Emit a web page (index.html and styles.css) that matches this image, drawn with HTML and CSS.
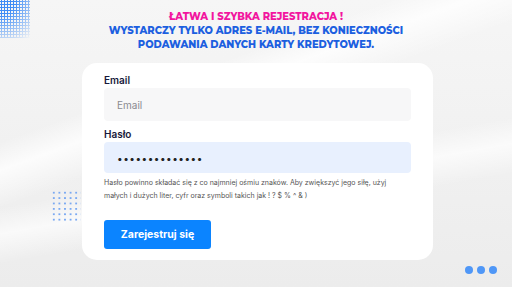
FILE: index.html
```html
<!DOCTYPE html>
<html lang="pl">

<head>
  <meta charset="UTF-8">
  <meta name="viewport" content="width=device-width, initial-scale=1.0">
  <title>Rejestracja</title>
  <link rel="stylesheet" href="styles.css">
</head>

<body>

  <div class="halftone"></div>
  <div class="dotgrid"></div>

  <div class="page">
    <div class="intro">
      <p class="intro-pink">ŁATWA I SZYBKA REJESTRACJA !</p>
      <p class="intro-blue">WYSTARCZY TYLKO ADRES E-MAIL, BEZ KONIECZNOŚCI<br>PODAWANIA DANYCH KARTY KREDYTOWEJ.</p>
    </div>

    <form class="card">
      <label class="label" for="email">Email</label>
      <input type="text" id="email" class="field" placeholder="Email">

      <label class="label" for="pass">Hasło</label>
      <input type="password" id="pass" class="field field-filled" value="abcdefghijklmn">

      <p class="hint">Hasło powinno składać się z co najmniej ośmiu znaków. Aby zwiększyć jego siłę, użyj małych i dużych liter, cyfr oraz symboli takich jak ! ? $ % ^ &amp; )</p>

      <button type="button" class="submit">Zarejestruj się</button>
    </form>
  </div>

  <!-- Pager dots -->
  <div class="pager">
    <span></span><span></span><span></span>
  </div>

</body>

</html>
```

FILE: styles.css
```css
/* General Reset */
body {
  margin: 0;
  padding: 0;
  width: 512px;
  height: 287px;
  overflow: hidden;
  position: relative;
  font-family: Inter, sans-serif;
  background:
    linear-gradient(160deg, transparent 30%, rgba(255, 255, 255, 0.8) 36%, transparent 44%),
    linear-gradient(170deg, transparent 55%, rgba(255, 255, 255, 0.7) 62%, transparent 70%),
    linear-gradient(180deg, #f6f6f6 0%, #ececec 100%);
}

/* Decorations */
.halftone {
  position: absolute;
  top: 0;
  left: 0;
  width: 30px;
  height: 38px;
  background-image: radial-gradient(circle, #3d8bf5 50%, transparent 60%);
  background-size: 3px 3px;
  -webkit-mask-image: radial-gradient(circle at 0 0, #000 30%, transparent 100%);
  mask-image: radial-gradient(circle at 0 0, #000 30%, transparent 100%);
}

.dotgrid {
  position: absolute;
  top: 190px;
  left: 51px;
  width: 30px;
  height: 32px;
  background-image: radial-gradient(circle, #7aa9f2 0.8px, transparent 1.2px);
  background-size: 5.6px 5.4px;
}

.page {
  position: relative;
  display: flex;
  flex-direction: column;
  align-items: center;
}

/* Heading */
.intro {
  padding-top: 9px;
  text-align: center;
  font-family: Montserrat, "Open Sans", sans-serif;
  font-weight: 800;
  font-size: 9.95px;
  line-height: 14px;
}

.intro p {
  margin: 0;
}

.intro-pink {
  color: #f2169f;
}

.intro-blue {
  color: #1c5fe0;
}

/* Card */
.card {
  margin-top: 12px;
  margin-left: 3px;
  width: 307px;
  padding: 10px 22px 11px;
  background: #fff;
  border-radius: 15px;
  display: flex;
  flex-direction: column;
}

.label {
  font-size: 10px;
  font-weight: 600;
  color: #17193a;
  line-height: 14px;
}

.field {
  margin-top: 1px;
  height: 33px;
  box-sizing: border-box;
  border: none;
  border-radius: 4px;
  background: #f7f7f8;
  padding: 0 13px;
  font-family: Inter, sans-serif;
  font-size: 10px;
  color: #222;
  outline: none;
}

.field::placeholder {
  color: #8a8a90;
}

.field + .label {
  margin-top: 6px;
}

.field-filled {
  height: 31px;
  background: #e8f0fe;
  letter-spacing: 0.5px;
}

.hint {
  margin: 3px 0 0;
  font-size: 7px;
  line-height: 13px;
  color: #555;
}

.submit {
  margin-top: 18px;
  align-self: flex-start;
  width: 107px;
  height: 29px;
  border: none;
  border-radius: 3px;
  background: #0b84ff;
  color: #fff;
  font-family: Inter, sans-serif;
  font-weight: 700;
  font-size: 10.5px;
}

/* Pager */
.pager {
  position: absolute;
  left: 465px;
  top: 266px;
  display: flex;
  gap: 4px;
}

.pager span {
  width: 8px;
  height: 8px;
  border-radius: 50%;
  background: #4f97f7;
}
```
